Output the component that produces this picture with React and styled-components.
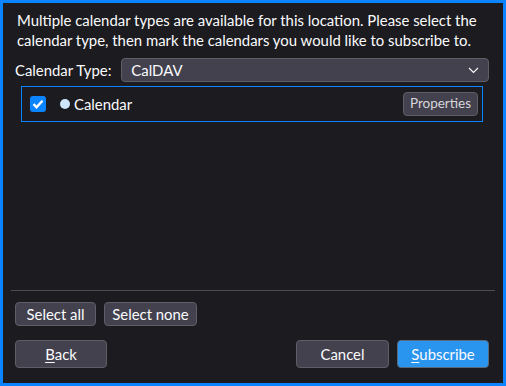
import React from "react";
import styled, { createGlobalStyle } from "styled-components";

const GlobalStyle = createGlobalStyle`
  html, body {
    margin: 0;
    padding: 0;
    background: #1c1b22;
  }
  body {
    font-family: Lato, "Noto Sans", sans-serif;
    color: #fbfbfe;
  }
`;

const Frame = styled.div`
  box-sizing: border-box;
  width: 506px;
  height: 386px;
  border: 3px solid #0a84ff;
  background: #1c1b1f;
  display: flex;
  flex-direction: column;
  padding: 7px 8px 15px;
`;

const Description = styled.p`
  margin: 0 6px;
  font-size: 14.9px;
  line-height: 20px;
  white-space: nowrap;
`;

const TypeRow = styled.div`
  display: flex;
  align-items: center;
  gap: 10px;
  margin: 8px 6px 0 4px;
`;

const Label = styled.span`
  font-size: 14.9px;
`;

const Select = styled.div`
  flex: 1;
  box-sizing: border-box;
  height: 24px;
  display: flex;
  align-items: center;
  justify-content: space-between;
  padding: 0 9px 0 9px;
  background: #42414d;
  border: 1px solid #5f5e66;
  border-radius: 4px;
  font-size: 14.9px;
`;

const ListBox = styled.div`
  box-sizing: border-box;
  height: 36px;
  margin: 4px 12px 0 10px;
  border: 1px solid #0a84ff;
  display: flex;
  align-items: center;
  padding: 0 4px 0 8px;
`;

const Check = styled.span`
  width: 16px;
  height: 16px;
  border-radius: 3px;
  background: #0a84ff;
  display: flex;
  align-items: center;
  justify-content: center;
`;

const Dot = styled.span`
  width: 10px;
  height: 10px;
  border-radius: 50%;
  background: #cfe6ff;
  margin: 0 4px 0 14px;
`;

const ItemName = styled.span`
  flex: 1;
  font-size: 14.9px;
`;

const Button = styled.button`
  box-sizing: border-box;
  height: ${(p) => (p.tall ? "28px" : "24px")};
  width: ${(p) => p.w};
  padding: 0;
  border-radius: 4px;
  border: 1px solid ${(p) => (p.primary ? "#5a6a7c" : "#5f5e66")};
  background: ${(p) => (p.primary ? "#2a95ee" : "#42414d")};
  color: ${(p) => (p.small ? "#d6d6dc" : "#fbfbfe")};
  font-family: inherit;
  font-size: ${(p) => (p.small ? "13.5px" : "14.9px")};
  line-height: 1;
  display: inline-flex;
  align-items: center;
  justify-content: center;
`;

const Spacer = styled.div`
  flex: 1;
`;

const Separator = styled.div`
  height: 1px;
  background: #4d4c53;
  margin-bottom: 11px;
`;

const ButtonRow = styled.div`
  display: flex;
  gap: 8px;
  padding: 0 6px 0 4px;
  margin-bottom: ${(p) => p.mb || "0"};
`;

const Key = styled.span`
  text-decoration: underline;
  text-underline-offset: 2px;
`;

const Chevron = () => (
  <svg width="11" height="7" viewBox="0 0 11 7">
    <path d="M1 1l4.5 4.5L10 1" fill="none" stroke="#fbfbfe" strokeWidth="1.1" />
  </svg>
);

const Tick = () => (
  <svg width="12" height="10" viewBox="0 0 12 10">
    <path d="M1.5 5.2l3 3 6-6.5" fill="none" stroke="#fff" strokeWidth="2.4" />
  </svg>
);

export default function App() {
  return (
    <>
      <GlobalStyle />
      <Frame>
        <Description>
          Multiple calendar types are available for this location. Please select the
          <br />
          calendar type, then mark the calendars you would like to subscribe to.
        </Description>
        <TypeRow>
          <Label>Calendar Type:</Label>
          <Select>
            <span>CalDAV</span>
            <Chevron />
          </Select>
        </TypeRow>
        <ListBox>
          <Check>
            <Tick />
          </Check>
          <Dot />
          <ItemName>Calendar</ItemName>
          <Button small w="75px">Properties</Button>
        </ListBox>
        <Spacer />
        <Separator />
        <ButtonRow mb="14px">
          <Button w="81px">Select all</Button>
          <Button w="93px">Select none</Button>
        </ButtonRow>
        <ButtonRow>
          <Button tall w="92px">
            <Key>B</Key>ack
          </Button>
          <Spacer />
          <Button tall w="93px">Cancel</Button>
          <Button tall primary w="92px">
            <Key>S</Key>ubscribe
          </Button>
        </ButtonRow>
      </Frame>
    </>
  );
}
